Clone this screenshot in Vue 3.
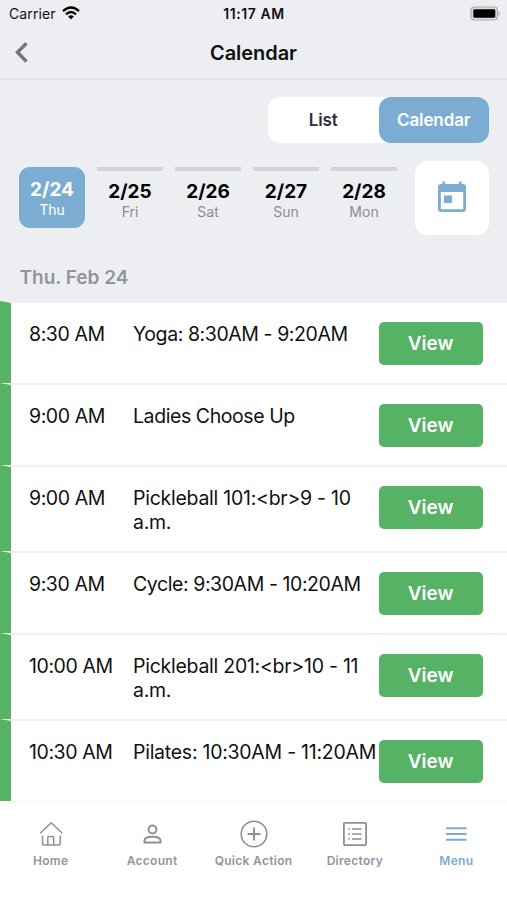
<script setup>
const days = [
  { date: '2/24', day: 'Thu', active: true },
  { date: '2/25', day: 'Fri' },
  { date: '2/26', day: 'Sat' },
  { date: '2/27', day: 'Sun' },
  { date: '2/28', day: 'Mon' },
]
const events = [
  { time: '8:30 AM', title: 'Yoga: 8:30AM - 9:20AM' },
  { time: '9:00 AM', title: 'Ladies Choose Up' },
  { time: '9:00 AM', title: 'Pickleball 101:<br>9 - 10 a.m.', wide: true },
  { time: '9:30 AM', title: 'Cycle: 9:30AM - 10:20AM' },
  { time: '10:00 AM', title: 'Pickleball 201:<br>10 - 11 a.m.', wide: true },
  { time: '10:30 AM', title: 'Pilates: 10:30AM - 11:20AM', wide: true },
]
</script>

<template>
  <div class="screen">
    <div class="status">
      <div class="carrier">
        <span>Carrier</span>
        <svg width="18" height="14" viewBox="0 0 18 14" fill="none" stroke="#000" stroke-width="2.3">
          <path d="M1 5.2Q9-2.1 17 5.2" />
          <path d="M4 8.4Q9 3.7 14 8.4" />
          <path d="M6.2 10.5Q9 8 11.8 10.5L9 13.5Z" fill="#000" stroke="none" />
        </svg>
      </div>
      <span class="clock">11:17 AM</span>
      <svg class="battery" width="31" height="15" viewBox="0 0 31 15">
        <rect x="1" y="1" width="26.5" height="13" rx="3.5" fill="#dcdcdd" stroke="#acacae" stroke-width="1.2" />
        <rect x="3.3" y="3.2" width="22" height="8.6" rx="1.4" fill="#000" />
        <path d="M28.5 5.2Q31 7.5 28.5 9.8Z" fill="#a6a6a8" />
      </svg>
    </div>
    <header class="nav">
      <svg class="back" width="14" height="22" viewBox="0 0 14 22" fill="none" stroke="#757577" stroke-width="3.4">
        <path d="M12.5 1.3L3.5 10.3L12.5 19.5" />
      </svg>
      <h1>Calendar</h1>
    </header>

    <div class="switch-row">
      <div class="switch">
        <button class="seg">List</button>
        <button class="seg on">Calendar</button>
      </div>
    </div>

    <div class="days">
      <div v-for="d in days" :key="d.date" class="day" :class="{ active: d.active }">
        <b>{{ d.date }}</b>
        <span>{{ d.day }}</span>
      </div>
      <button class="picker">
        <svg width="30" height="34" viewBox="0 0 30 34">
          <path fill="#7badd3" fill-rule="evenodd" d="M5.4 0.5H8V3H22V0.5H24.6V3H26Q29 3 29 6V28Q29 31 26 31H4Q1 31 1 28V6Q1 3 4 3H5.4ZM3.8 11V28.2H26.2V11Z" />
          <rect x="7" y="14.5" width="8" height="7.5" fill="#7badd3" />
        </svg>
      </button>
    </div>

    <h2>Thu. Feb 24</h2>

    <main>
      <div v-for="(e, i) in events" :key="i" class="event">
        <span class="time">{{ e.time }}</span>
        <span class="title" :class="{ wide: e.wide }">{{ e.title }}</span>
        <button class="view">View</button>
      </div>
    </main>

    <footer class="tabs">
      <div class="tab">
        <svg width="28" height="28" viewBox="0 0 28 28" fill="none" stroke="#8e9097" stroke-width="1.5" stroke-linejoin="round">
          <path d="M3.2 13.3L14.2 2.7L25.2 13.3" />
          <path d="M5.5 15.5V23.8Q5.5 25 6.7 25H10.8V17.5Q10.8 16.5 11.8 16.5H15.7Q16.7 16.5 16.7 17.5V25H22Q23.2 25 23.2 23.8V15.5M10.8 25H16.7" />
        </svg>
        <span>Home</span>
      </div>
      <div class="tab">
        <svg width="28" height="28" viewBox="0 0 28 28" fill="none" stroke="#8e9097" stroke-width="2">
          <circle cx="14.5" cy="9.5" r="3.9" />
          <path d="M6.5 22.5V20.5C6.5 15.6 22.5 15.6 22.5 20.5V22.5Z" />
        </svg>
        <span>Account</span>
      </div>
      <div class="tab">
        <svg width="28" height="28" viewBox="0 0 28 28" fill="none" stroke="#8e9097" stroke-width="1.6">
          <circle cx="14" cy="14" r="12.8" />
          <path d="M14 7.5V20.5M7.5 14H20.5" stroke-width="1.9" />
        </svg>
        <span>Quick Action</span>
      </div>
      <div class="tab">
        <svg width="28" height="28" viewBox="0 0 28 28" fill="none" stroke="#8e9097" stroke-width="1.8">
          <rect x="2.9" y="2.9" width="22.2" height="22.2" rx="1" />
          <path d="M11 9H20.5M11 14H20.5M11 19H20.5M7.3 9H9M7.3 14H9M7.3 19H9" stroke-width="1.7" />
        </svg>
        <span>Directory</span>
      </div>
      <div class="tab current">
        <svg width="28" height="28" viewBox="0 0 28 28" fill="none" stroke="#7badd3" stroke-width="2">
          <path d="M4 8.2H24.5M4 14H24.5M4 19.7H24.5" />
        </svg>
        <span>Menu</span>
      </div>
    </footer>
  </div>
</template>

<style>
body {
  margin: 0;
  background: #fff;
}
</style>

<style scoped>
.screen {
  box-sizing: border-box;
  width: 507px;
  height: 900px;
  overflow: hidden;
  background: #edeef2;
  font-family: Inter, "Liberation Sans", sans-serif;
  color: #111;
}
button {
  border: 0;
  padding: 0;
  font-family: inherit;
}
.status {
  display: grid;
  grid-template-columns: 1fr auto 1fr;
  align-items: center;
  box-sizing: border-box;
  height: 28px;
  padding: 0 6px 2px 9px;
  font-size: 14px;
}
.carrier {
  display: flex;
  align-items: center;
  gap: 6px;
  letter-spacing: 0.1px;
}
.clock {
  font-weight: 600;
  letter-spacing: 0.6px;
  margin-right: 2px;
}
.battery {
  justify-self: end;
}
.nav {
  display: grid;
  grid-template-columns: 1fr auto 1fr;
  align-items: center;
  box-sizing: border-box;
  height: 52px;
  padding: 0 14px 1px;
  border-bottom: 2px solid #e0e1e4;
}
h1 {
  margin: 0;
  font-size: 20px;
  font-weight: 600;
  letter-spacing: -0.05px;
}
.switch-row {
  display: flex;
  justify-content: flex-end;
  padding: 17px 18px 0 0;
}
.switch {
  display: flex;
  width: 221px;
  height: 46px;
  border-radius: 12px;
  background: #fff;
}
.seg {
  flex: 1;
  border-radius: 12px;
  background: transparent;
  color: #2c2e3b;
  font-size: 17px;
  font-weight: 600;
  letter-spacing: -0.1px;
}
.seg.on {
  background: #7badd3;
  color: #fff;
}
.days {
  display: flex;
  align-items: flex-start;
  gap: 12px;
  height: 74px;
  padding: 18px 18px 0 19px;
}
.day {
  display: flex;
  flex-direction: column;
  align-items: center;
  box-sizing: border-box;
  width: 66px;
  height: 61px;
  margin-top: 6px;
  padding-top: 9px;
  border-top: 4px solid #d2d4d7;
}
.day b {
  color: #000;
  font-size: 19px;
  font-weight: 700;
  line-height: 23px;
}
.day span {
  color: #8b8c90;
  font-size: 14px;
  line-height: 18px;
}
.day.active {
  padding-top: 11px;
  border-top: 0;
  border-radius: 11px;
  background: #7badd3;
}
.day.active b,
.day.active span {
  color: #fff;
}
.picker {
  display: flex;
  align-items: center;
  justify-content: center;
  width: 74px;
  height: 74px;
  margin-left: auto;
  border-radius: 12px;
  background: #fff;
}
h2 {
  margin: 0;
  height: 66px;
  padding-left: 19.5px;
  color: #92949b;
  font-size: 19px;
  font-weight: 600;
  line-height: 85px;
}
.event {
  display: flex;
  align-items: flex-start;
  box-sizing: border-box;
  min-height: 82px;
  padding: 18px 24px 17px 18px;
  border-top: 2px solid #f1f1f2;
  border-left: 11px solid #56b264;
  background: #fff;
  font-size: 19.5px;
  line-height: 23.5px;
  letter-spacing: -0.42px;
}
.event:first-child {
  border-top-color: #edeef2;
}
.time {
  width: 104px;
  padding-top: 2px;
}
.title {
  width: 245.5px;
  padding-top: 2px;
}
.title.wide {
  letter-spacing: -0.26px;
}
.view {
  width: 104px;
  height: 43px;
  margin-top: 0.5px;
  padding-top: 1px;
  border-radius: 5px;
  background: #56b264;
  color: #fff;
  font-size: 19px;
  font-weight: 600;
}
.tabs {
  display: flex;
  box-sizing: border-box;
  height: 99px;
  padding-top: 18px;
  border-top: 1px solid #f4f4f5;
  background: #fff;
}
.tab {
  display: flex;
  flex: 1;
  flex-direction: column;
  align-items: center;
  gap: 5px;
  color: #92949b;
  font-size: 12px;
  font-weight: 600;
  line-height: 16px;
  letter-spacing: 0.3px;
  white-space: nowrap;
}
.tab.current {
  color: #7badd3;
}
</style>
